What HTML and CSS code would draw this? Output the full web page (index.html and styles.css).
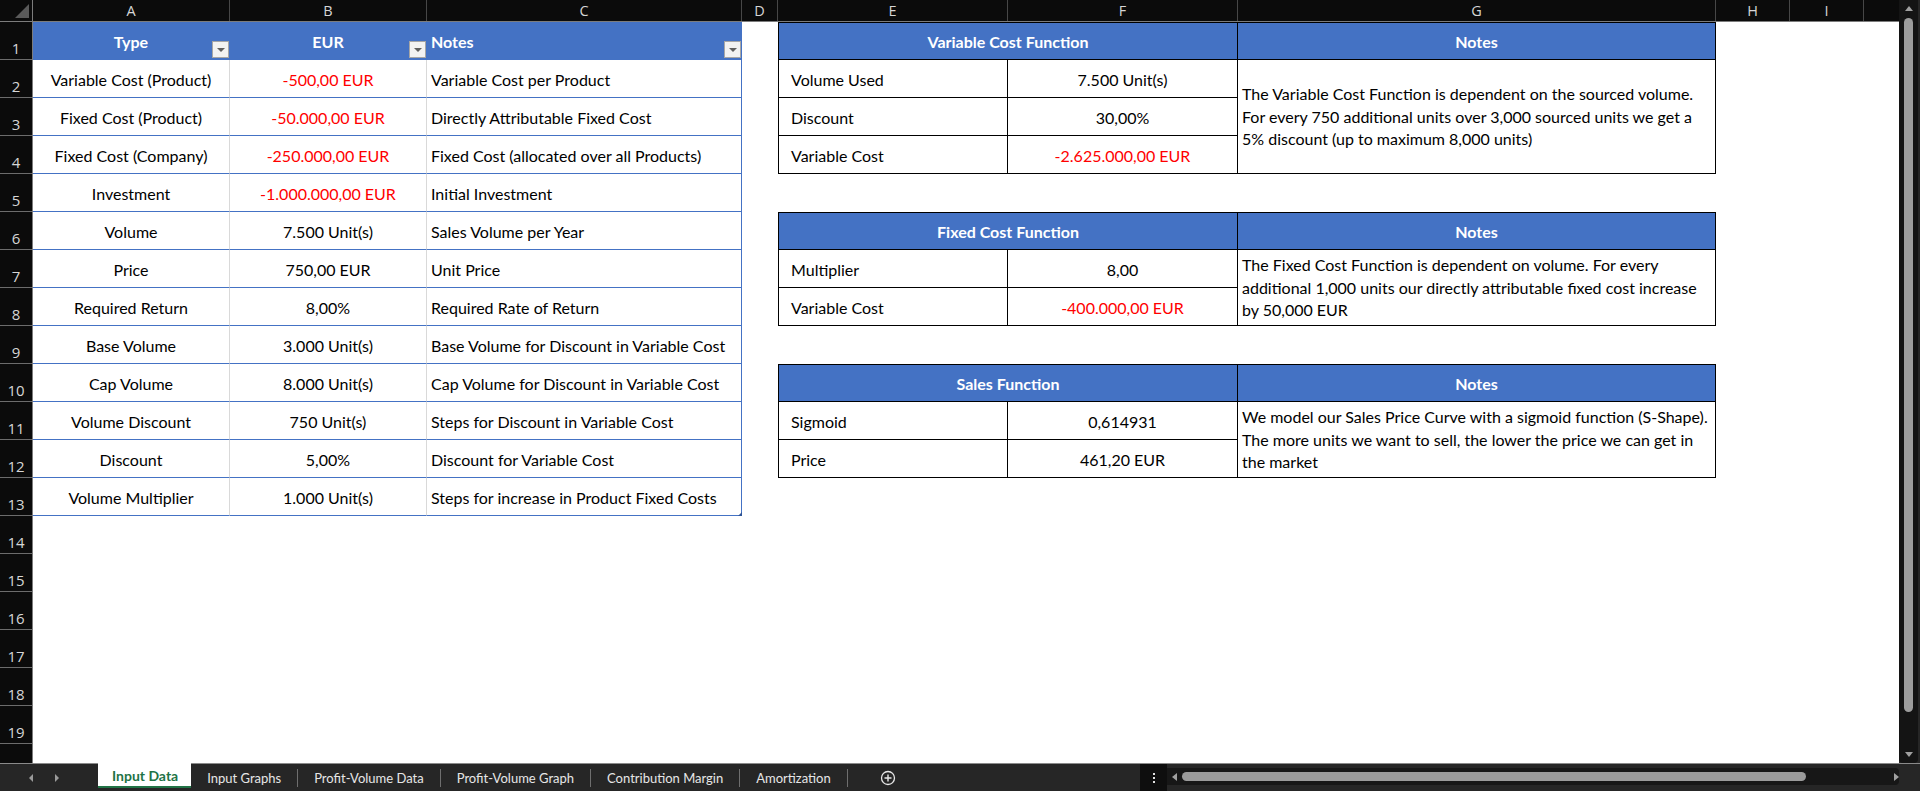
FILE: index.html
```html
<!DOCTYPE html>
<html>
<head>
<meta charset="utf-8">
<title>Input Data</title>
<link rel="stylesheet" href="styles.css">
</head>
<body>
<div class="app">
  <div class="workspace">
    <div class="sheet">
      <div class="colheads">
        <div class="corner"><span class="corner-tri"></span></div>
        <div class="ch w-a">A</div>
        <div class="ch w-b">B</div>
        <div class="ch w-c">C</div>
        <div class="ch w-d">D</div>
        <div class="ch w-e">E</div>
        <div class="ch w-f">F</div>
        <div class="ch w-g">G</div>
        <div class="ch w-h">H</div>
        <div class="ch w-i">I</div>
        <div class="ch ch-rest"></div>
      </div>
      <div class="body">
        <div class="rowheads">
          <div class="rh">1</div>
          <div class="rh">2</div>
          <div class="rh">3</div>
          <div class="rh">4</div>
          <div class="rh">5</div>
          <div class="rh">6</div>
          <div class="rh">7</div>
          <div class="rh">8</div>
          <div class="rh">9</div>
          <div class="rh">10</div>
          <div class="rh">11</div>
          <div class="rh">12</div>
          <div class="rh">13</div>
          <div class="rh">14</div>
          <div class="rh">15</div>
          <div class="rh">16</div>
          <div class="rh">17</div>
          <div class="rh">18</div>
          <div class="rh">19</div>
          <div class="rh rh-part"></div>
        </div>
        <div class="cells">
          <div class="tbl-input">
            <div class="c c-a h">Type<span class="filter"></span></div>
            <div class="c c-b h">EUR<span class="filter"></span></div>
            <div class="c c-c h">Notes<span class="filter"></span></div>

            <div class="c c-a">Variable Cost (Product)</div>
            <div class="c c-b neg">-500,00 EUR</div>
            <div class="c c-c">Variable Cost per Product</div>

            <div class="c c-a">Fixed Cost (Product)</div>
            <div class="c c-b neg">-50.000,00 EUR</div>
            <div class="c c-c">Directly Attributable Fixed Cost</div>

            <div class="c c-a">Fixed Cost (Company)</div>
            <div class="c c-b neg">-250.000,00 EUR</div>
            <div class="c c-c">Fixed Cost (allocated over all Products)</div>

            <div class="c c-a">Investment</div>
            <div class="c c-b neg">-1.000.000,00 EUR</div>
            <div class="c c-c">Initial Investment</div>

            <div class="c c-a">Volume</div>
            <div class="c c-b">7.500 Unit(s)</div>
            <div class="c c-c">Sales Volume per Year</div>

            <div class="c c-a">Price</div>
            <div class="c c-b">750,00 EUR</div>
            <div class="c c-c">Unit Price</div>

            <div class="c c-a">Required Return</div>
            <div class="c c-b">8,00%</div>
            <div class="c c-c">Required Rate of Return</div>

            <div class="c c-a">Base Volume</div>
            <div class="c c-b">3.000 Unit(s)</div>
            <div class="c c-c">Base Volume for Discount in Variable Cost</div>

            <div class="c c-a">Cap Volume</div>
            <div class="c c-b">8.000 Unit(s)</div>
            <div class="c c-c">Cap Volume for Discount in Variable Cost</div>

            <div class="c c-a">Volume Discount</div>
            <div class="c c-b">750 Unit(s)</div>
            <div class="c c-c">Steps for Discount in Variable Cost</div>

            <div class="c c-a">Discount</div>
            <div class="c c-b">5,00%</div>
            <div class="c c-c">Discount for Variable Cost</div>

            <div class="c c-a">Volume Multiplier</div>
            <div class="c c-b">1.000 Unit(s)</div>
            <div class="c c-c last">Steps for increase in Product Fixed Costs<span class="resize"></span></div>
          </div>

          <div class="tbl-side tbl-var">
            <div class="s s-head">Variable Cost Function</div>
            <div class="s s-nhead">Notes</div>
            <div class="s s-label">Volume Used</div>
            <div class="s s-val">7.500 Unit(s)</div>
            <div class="s s-note span3"><div class="note-text">The Variable Cost Function is dependent on the sourced volume.<br>For every 750 additional units over 3,000 sourced units we get a<br>5% discount (up to maximum 8,000 units)</div></div>
            <div class="s s-label">Discount</div>
            <div class="s s-val">30,00%</div>
            <div class="s s-label">Variable Cost</div>
            <div class="s s-val neg">-2.625.000,00 EUR</div>
          </div>

          <div class="tbl-side tbl-fixed">
            <div class="s s-head">Fixed Cost Function</div>
            <div class="s s-nhead">Notes</div>
            <div class="s s-label">Multiplier</div>
            <div class="s s-val">8,00</div>
            <div class="s s-note span2"><div class="note-text">The Fixed Cost Function is dependent on volume. For every<br>additional 1,000 units our directly attributable fixed cost increase<br>by 50,000 EUR</div></div>
            <div class="s s-label">Variable Cost</div>
            <div class="s s-val neg">-400.000,00 EUR</div>
          </div>

          <div class="tbl-side tbl-sales">
            <div class="s s-head">Sales Function</div>
            <div class="s s-nhead">Notes</div>
            <div class="s s-label">Sigmoid</div>
            <div class="s s-val">0,614931</div>
            <div class="s s-note span2"><div class="note-text">We model our Sales Price Curve with a sigmoid function (S-Shape).<br>The more units we want to sell, the lower the price we can get in<br>the market</div></div>
            <div class="s s-label">Price</div>
            <div class="s s-val">461,20 EUR</div>
          </div>
        </div>
      </div>
    </div>
    <div class="vscroll">
      <div class="vtrack">
        <span class="arr-up"></span>
        <span class="vthumb"></span>
        <span class="arr-down"></span>
      </div>
    </div>
  </div>

  <div class="tabbar">
    <div class="nav">
      <span class="nav-left"></span>
      <span class="nav-right"></span>
    </div>
    <div class="tab active">Input Data</div>
    <div class="tab">Input Graphs</div><span class="sep"></span>
    <div class="tab">Profit-Volume Data</div><span class="sep"></span>
    <div class="tab">Profit-Volume Graph</div><span class="sep"></span>
    <div class="tab">Contribution Margin</div><span class="sep"></span>
    <div class="tab">Amortization</div><span class="sep"></span>
    <div class="add">
      <svg width="16" height="16" viewBox="0 0 16 16"><circle cx="8" cy="8" r="6.5" fill="none" stroke="#e8e8e8" stroke-width="1.3"/><path d="M8 4.5v7M4.5 8h7" stroke="#e8e8e8" stroke-width="1.4"/></svg>
    </div>
    <div class="spacer"></div>
    <div class="hs-area">
      <div class="dots"><span></span><span></span><span></span></div>
      <div class="htrack">
        <span class="arr-left"></span>
        <span class="hthumb"></span>
        <span class="arr-right"></span>
      </div>
      <div class="hcorner"></div>
    </div>
  </div>
</div>
</body>
</html>
```

FILE: styles.css
```css
* { box-sizing: border-box; }

body {
  margin: 0;
  background: #ffffff;
  font-family: "Lato", "Liberation Sans", sans-serif;
  overflow: hidden;
}

.app {
  width: 1920px;
  height: 791px;
  display: flex;
  flex-direction: column;
}

.workspace {
  display: flex;
  height: 763px;
}

.sheet {
  width: 1899px;
  display: flex;
  flex-direction: column;
  background: #ffffff;
  overflow: hidden;
}

/* ---------- column headers ---------- */
.colheads {
  display: flex;
  height: 22px;
  flex: none;
  background: #0b0b0b;
  border-bottom: 1px solid #7c7c7c;
  font-family: "Open Sans", "Noto Sans", sans-serif;
  font-size: 14.5px;
  color: #d6d6d6;
}

.corner {
  width: 33px;
  flex: none;
  border-right: 1px solid #7c7c7c;
  display: flex;
  align-items: flex-end;
  justify-content: flex-end;
  padding: 0 3px 3px 0;
}

.corner-tri {
  width: 0;
  height: 0;
  border-left: 14px solid transparent;
  border-bottom: 14px solid #5a5a5a;
}

.ch {
  flex: none;
  border-right: 1px solid #474747;
  display: flex;
  align-items: center;
  justify-content: center;
  line-height: 1;
  padding-top: 1px;
}

.w-a { width: 197px; }
.w-b { width: 197px; }
.w-c { width: 315px; }
.w-d { width: 36px; }
.w-e { width: 230px; }
.w-f { width: 230px; }
.w-g { width: 478px; }
.w-h { width: 74px; }
.w-i { width: 74px; }
.ch-rest { flex: 1; border-right: none; }

/* ---------- body ---------- */
.body {
  display: flex;
  flex: 1;
  min-height: 0;
}

.rowheads {
  width: 33px;
  flex: none;
  background: #0b0b0b;
  border-right: 1px solid #7c7c7c;
  display: flex;
  flex-direction: column;
  overflow: hidden;
}

.rh {
  height: 38px;
  flex: none;
  border-bottom: 1px solid #6c6c6c;
  display: flex;
  align-items: flex-end;
  justify-content: center;
  padding-bottom: 3px;
  font-family: "Open Sans", "Noto Sans", sans-serif;
  font-size: 15px;
  line-height: 1;
  color: #d6d6d6;
}

.rh-part { height: 19px; border-bottom: none; }

.cells {
  flex: 1;
  display: grid;
  grid-template-columns: 197px 197px 315px 36px 230px 230px 478px 74px 74px 1fr;
  grid-template-rows: repeat(19, 38px) 1fr;
  background: #ffffff;
  font-size: 16px;
  color: #000000;
}

/* ---------- input table ---------- */
.tbl-input {
  grid-column: 1 / 4;
  grid-row: 1 / 14;
  display: grid;
  grid-template-columns: 197px 197px 315px;
  grid-template-rows: repeat(13, 38px);
}

.c {
  display: flex;
  align-items: center;
  white-space: nowrap;
  border-bottom: 1px solid #4472c4;
  position: relative;
  padding-top: 1px;
}

.c-a, .c-b {
  justify-content: center;
  border-right: 1px solid #d9d9d9;
}

.c-c {
  padding-left: 4px;
  border-right: 1px solid #4472c4;
}

.h {
  background: #4472c4;
  color: #ffffff;
  font-weight: 700;
  border-right-color: #4472c4;
}

.neg { color: #ff0000; }

.filter {
  position: absolute;
  right: 0;
  bottom: 1px;
  width: 17px;
  height: 17px;
  background: #f2f2f2;
  border: 1px solid #a6a6a6;
  display: flex;
  align-items: center;
  justify-content: center;
}

.filter::after {
  content: "";
  width: 0;
  height: 0;
  border-left: 4px solid transparent;
  border-right: 4px solid transparent;
  border-top: 4px solid #5f5f5f;
  margin-top: 1px;
}

.resize {
  position: absolute;
  right: -1px;
  bottom: -1px;
  width: 0;
  height: 0;
  border-left: 4px solid transparent;
  border-bottom: 4px solid #2f5597;
}

/* ---------- side tables ---------- */
.tbl-side {
  grid-column: 5 / 8;
  display: grid;
  grid-template-columns: 229px 230px 478px;
  border-top: 1px solid #000000;
  border-left: 1px solid #000000;
}

.tbl-var { grid-row: 1 / 5; grid-template-rows: 37px 38px 38px 38px; }
.tbl-fixed { grid-row: 6 / 9; grid-template-rows: 37px 38px 38px; }
.tbl-sales { grid-row: 10 / 13; grid-template-rows: 37px 38px 38px; }

.s {
  display: flex;
  align-items: center;
  white-space: nowrap;
  border-right: 1px solid #000000;
  border-bottom: 1px solid #000000;
  padding-top: 1px;
}

.s-head {
  grid-column: 1 / 3;
  background: #4472c4;
  color: #ffffff;
  font-weight: 700;
  justify-content: center;
}

.s-nhead {
  background: #4472c4;
  color: #ffffff;
  font-weight: 700;
  justify-content: center;
}

.s-label { padding-left: 12px; }
.s-val { justify-content: center; }

.s-note {
  grid-column: 3;
  padding-left: 4px;
}

.span3 { grid-row: 2 / 5; }
.span2 { grid-row: 2 / 4; }

.note-text {
  line-height: 22.7px;
}

/* ---------- vertical scrollbar ---------- */
.vscroll {
  width: 21px;
  flex: none;
  background: #262626;
  padding: 0 2px 0 0;
  display: flex;
}

.vtrack {
  flex: 1;
  background: #141414;
  border-radius: 0 0 4px 4px;
  display: flex;
  flex-direction: column;
  align-items: center;
}

.arr-up {
  margin-top: 6px;
  width: 0;
  height: 0;
  border-left: 4px solid transparent;
  border-right: 4px solid transparent;
  border-bottom: 5px solid #a0a0a0;
}

.vthumb {
  margin-top: 7px;
  width: 9px;
  height: 694px;
  border-radius: 5px;
  background: #9d9d9d;
}

.arr-down {
  margin-top: 40px;
  width: 0;
  height: 0;
  border-left: 4px solid transparent;
  border-right: 4px solid transparent;
  border-top: 5px solid #a0a0a0;
}

/* ---------- tab bar ---------- */
.tabbar {
  height: 28px;
  flex: none;
  background: #262626;
  border-top: 1px solid #8a8a8a;
  display: flex;
  align-items: stretch;
  color: #e6e6e6;
  font-family: "Lato", "Liberation Sans", sans-serif;
  font-size: 13px;
}

.nav {
  width: 98px;
  flex: none;
  display: flex;
  align-items: center;
  padding-left: 29px;
  gap: 22px;
}

.nav-left {
  width: 0;
  height: 0;
  border-top: 4px solid transparent;
  border-bottom: 4px solid transparent;
  border-right: 4px solid #9a9a9a;
}

.nav-right {
  width: 0;
  height: 0;
  border-top: 4px solid transparent;
  border-bottom: 4px solid transparent;
  border-left: 4px solid #9a9a9a;
}

.tab {
  display: flex;
  align-items: center;
  padding: 0 16px;
  white-space: nowrap;
}

.tab.active {
  margin-top: -1px;
  margin-bottom: 3px;
  padding: 2px 13px 0 14px;
  background: #ffffff;
  color: #217346;
  font-size: 14px;
  font-weight: 700;
  border-bottom: 2px solid #217346;
}

.sep {
  align-self: center;
  width: 1px;
  height: 18px;
  background: #6e6e6e;
  flex: none;
}

.add {
  display: flex;
  align-items: center;
  margin-left: 32px;
}

.spacer { flex: 1; }

.hs-area {
  width: 780px;
  flex: none;
  display: flex;
}

.dots {
  width: 27px;
  background: #0e0e0e;
  display: flex;
  flex-direction: column;
  align-items: center;
  justify-content: center;
  gap: 2px;
}

.dots span {
  width: 2px;
  height: 2px;
  background: #e0e0e0;
}

.htrack {
  width: 732px;
  height: 17px;
  margin-top: 4px;
  background: #171717;
  border-radius: 0 4px 4px 0;
  display: flex;
  align-items: center;
  padding-left: 5px;
}

.arr-left {
  width: 0;
  height: 0;
  border-top: 4px solid transparent;
  border-bottom: 4px solid transparent;
  border-right: 5px solid #a0a0a0;
}

.hthumb {
  margin-left: 5px;
  width: 624px;
  height: 9px;
  border-radius: 5px;
  background: #9b9b9b;
}

.arr-right {
  margin-left: 88px;
  width: 0;
  height: 0;
  border-top: 4px solid transparent;
  border-bottom: 4px solid transparent;
  border-left: 5px solid #a0a0a0;
}

.hcorner { flex: 1; }
```
